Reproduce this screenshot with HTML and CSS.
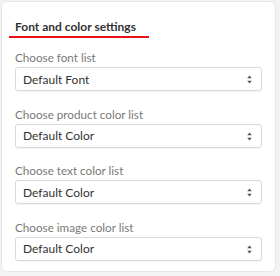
FILE: index.html
```html
<!DOCTYPE html>
<html lang="en">
<head>
    <meta charset="UTF-8">
    <meta name="viewport" content="width=device-width, initial-scale=1.0">
    <title>Font and color settings</title>
    <link rel="stylesheet" href="styles.css">
</head>
<body>
    <div class="card">
        <h2 class="card-title">Font and color settings</h2>

        <div class="form-group">
            <label for="fontList">Choose font list</label>
            <div class="select-wrap">
                <select id="fontList">
                    <option>Default Font</option>
                </select>
                <svg class="select-arrow" width="5" height="9" viewBox="0 0 5 9"><path d="M2.5 0.5L4.8 3.3H0.2Z M2.5 8.5L4.8 5.7H0.2Z" fill="#555"/></svg>
            </div>
        </div>

        <div class="form-group">
            <label for="productColor">Choose product color list</label>
            <div class="select-wrap">
                <select id="productColor">
                    <option>Default Color</option>
                </select>
                <svg class="select-arrow" width="5" height="9" viewBox="0 0 5 9"><path d="M2.5 0.5L4.8 3.3H0.2Z M2.5 8.5L4.8 5.7H0.2Z" fill="#555"/></svg>
            </div>
        </div>

        <div class="form-group">
            <label for="textColor">Choose text color list</label>
            <div class="select-wrap">
                <select id="textColor">
                    <option>Default Color</option>
                </select>
                <svg class="select-arrow" width="5" height="9" viewBox="0 0 5 9"><path d="M2.5 0.5L4.8 3.3H0.2Z M2.5 8.5L4.8 5.7H0.2Z" fill="#555"/></svg>
            </div>
        </div>

        <div class="form-group">
            <label for="imageColor">Choose image color list</label>
            <div class="select-wrap">
                <select id="imageColor">
                    <option>Default Color</option>
                </select>
                <svg class="select-arrow" width="5" height="9" viewBox="0 0 5 9"><path d="M2.5 0.5L4.8 3.3H0.2Z M2.5 8.5L4.8 5.7H0.2Z" fill="#555"/></svg>
            </div>
        </div>
    </div>
</body>
</html>
```

FILE: styles.css
```css
* {
    margin: 0;
    padding: 0;
    box-sizing: border-box;
    font-family: Lato, 'Noto Sans', sans-serif;
}

body {
    background: #f3f3f4;
    padding: 1px 4px 0 1px;
}

.card {
    width: 275px;
    height: 271px;
    background: #ffffff;
    border: 1px solid #e6e6e6;
    border-radius: 6px;
    padding: 13px 13px 0 13px;
}

.card-title {
    display: inline-block;
    margin-left: -6px;
    padding: 0 13px 0 6px;
    font-size: 12px;
    line-height: 18px;
    font-weight: 700;
    color: #333333;
    border-bottom: 2px solid #e8101a;
    margin-bottom: 10px;
}

.form-group {
    margin-bottom: 13.67px;
}

label {
    display: block;
    font-size: 11.7px;
    line-height: 18px;
    color: #7a7a7a;
    margin-bottom: 1px;
}

.select-wrap {
    position: relative;
}

select {
    display: block;
    width: 100%;
    height: 24px;
    appearance: none;
    -webkit-appearance: none;
    border: 1px solid #d9d9d9;
    border-radius: 3px;
    background: #ffffff;
    box-shadow: 0 1px 0 rgba(0, 0, 0, 0.04);
    padding: 0 20px 0 7px;
    font-size: 12px;
    color: #333333;
    outline: none;
}

.select-arrow {
    position: absolute;
    right: 10px;
    top: 8px;
    pointer-events: none;
}
```
